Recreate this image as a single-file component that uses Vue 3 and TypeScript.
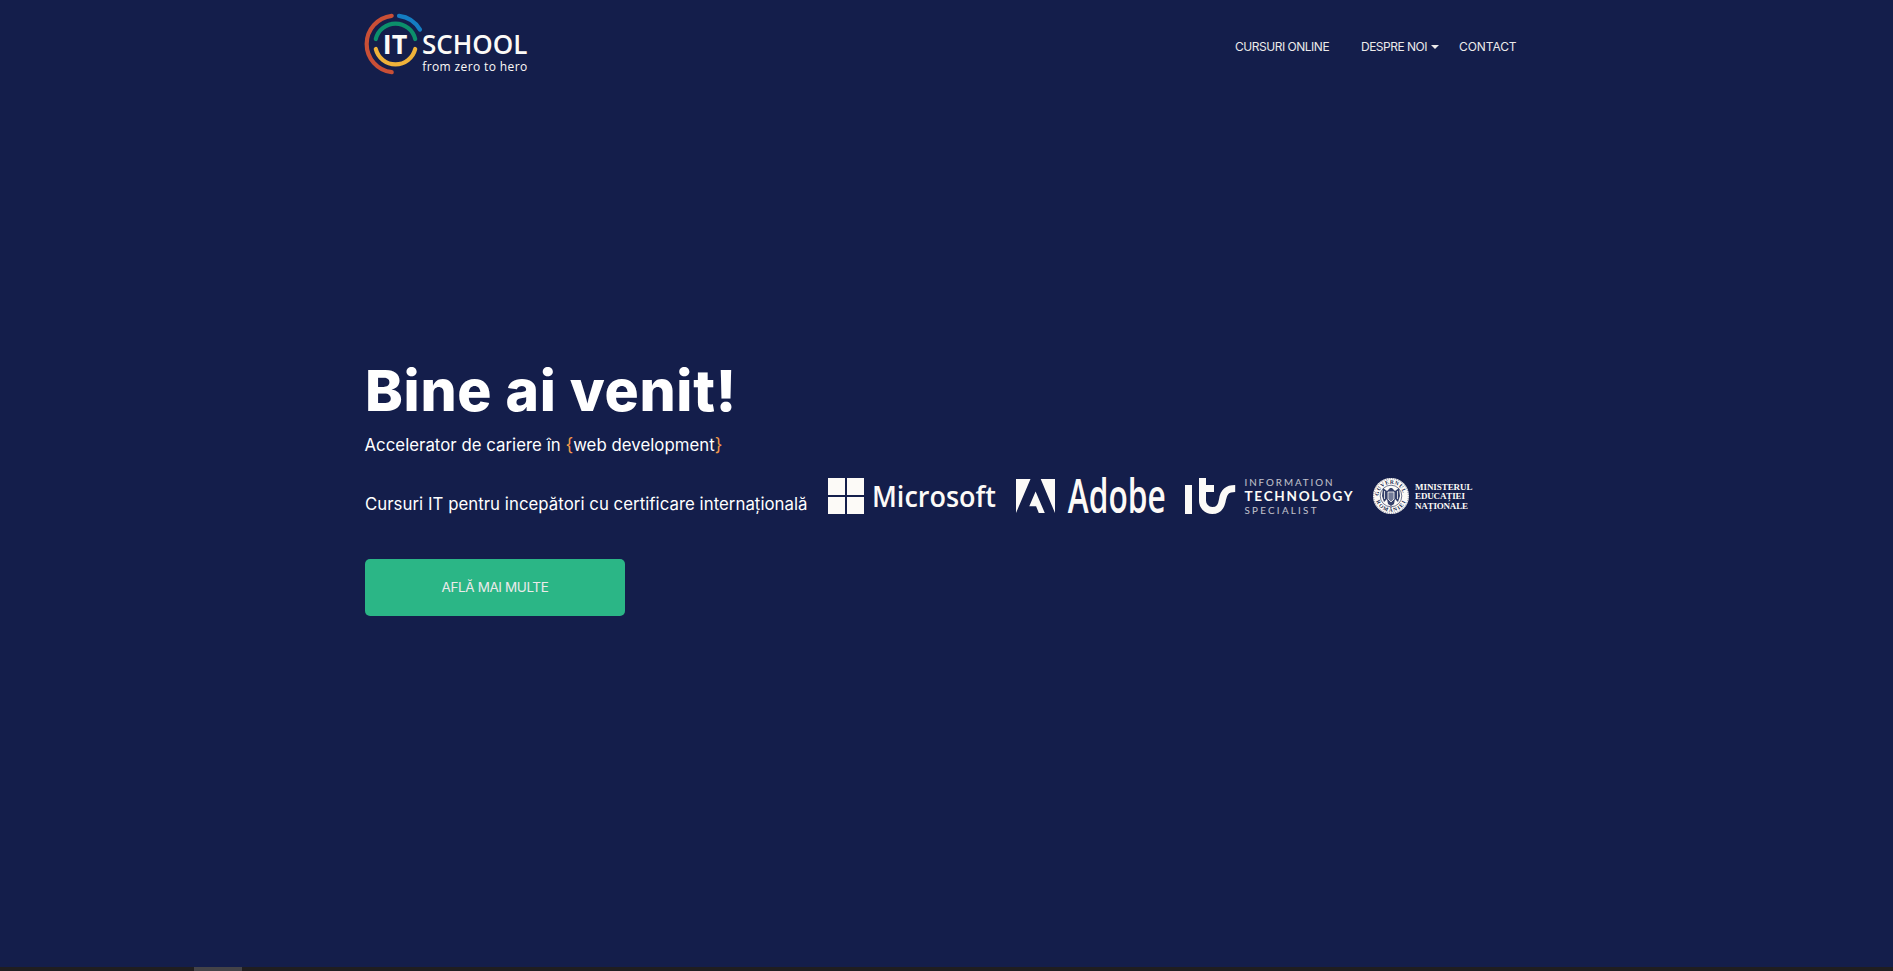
<script setup lang="ts">
interface NavItem {
  label: string
  key: string
  dropdown?: boolean
}

const navItems: NavItem[] = [
  { label: 'CURSURI ONLINE', key: 'courses' },
  { label: 'DESPRE NOI', key: 'about', dropdown: true },
  { label: 'CONTACT', key: 'contact' },
]
</script>

<template>
  <div class="page">
    <header class="container header">
      <a class="brand" aria-label="IT School">
        <svg width="164" height="64" viewBox="364 12 164 64">
          <g fill="none" stroke-width="4.2" stroke-linecap="round">
            <path d="M391.7 15.8A28.4 28.4 0 0 0 391.7 72.2" stroke="#c94f36" />
            <path d="M399 15.8A28.4 28.4 0 0 1 420 29.6" stroke="#147dc2" />
            <path d="M375.8 39A20.3 20.3 0 0 1 415.2 39" stroke="#0c8f6b" />
            <path d="M375.8 49A20.3 20.3 0 0 0 415.2 49" stroke="#efb23a" />
          </g>
          <g fill="#fcfaf7" class="brand-text">
            <text x="382.8" y="54" font-size="27.5" font-weight="700" textLength="24.5" lengthAdjust="spacingAndGlyphs">IT</text>
            <text x="421.9" y="54" font-size="27.5" font-weight="650" textLength="105.5" lengthAdjust="spacingAndGlyphs">SCHOOL</text>
            <text x="422.2" y="71" font-size="12" textLength="105" lengthAdjust="spacing">from zero to hero</text>
          </g>
        </svg>
      </a>
      <nav class="nav">
        <a v-for="item in navItems" :key="item.key" :class="['nav-link', item.key]">
          {{ item.label }}<span v-if="item.dropdown" class="caret"></span>
        </a>
      </nav>
    </header>

    <main class="container hero">
      <h1>Bine ai venit!</h1>
      <p class="lead">Accelerator de cariere în <span class="brace">{</span>web development<span class="brace">}</span></p>
      <div class="partners">
        <p class="courses-text">Cursuri IT pentru incepători cu certificare internațională</p>
        <svg class="logo" width="168" height="40" viewBox="828 477 168 40" fill="#fcfaf7">
          <path d="M828 479h17v17h-17zM847 479h17v17h-17zM828 498h17v17h-17zM847 498h17v17h-17z" />
          <text class="sans" x="872" y="507.5" font-size="29.5" font-weight="600" textLength="124" lengthAdjust="spacingAndGlyphs">Microsoft</text>
        </svg>
        <svg class="logo" width="150" height="40" viewBox="1016 477 150 40" fill="#fcfaf7">
          <path d="M1016 480h14.5l-14.5 34zM1040.7 480h14.3v34zM1035.6 492.5l9.2 21.5h-6l-2.7-6.8h-6.8z" />
          <text class="sans" x="1067.8" y="514.3" font-size="46.5" font-weight="650" textLength="98" lengthAdjust="spacingAndGlyphs">Adobe</text>
        </svg>
        <svg class="logo its" width="168" height="40" viewBox="1185 477 168 40" fill="#fcfaf7">
          <path d="M1185 486h7v29h-7z" />
          <path d="M1202.5 479v22.5a9.7 9.7 0 0 0 9.7 10c7.2 0 9.3-4.8 10.3-11 1-7 4-11 12.7-11" fill="none" stroke="#fcfaf7" stroke-width="7" />
          <path d="M1205 486h9v7h-9z" />
          <g class="geo">
            <text x="1244.5" y="487" font-size="9.8" font-weight="400" opacity=".75" textLength="88" lengthAdjust="spacing">INFORMATION</text>
            <text x="1244.5" y="502" font-size="13.6" font-weight="700" textLength="108" lengthAdjust="spacing">TECHNOLOGY</text>
            <text x="1244.5" y="514.5" font-size="9.8" font-weight="400" opacity=".75" textLength="72" lengthAdjust="spacing">SPECIALIST</text>
          </g>
        </svg>
        <svg class="logo seal" width="102" height="40" viewBox="1372 477 102 40" fill="#fcfaf7">
          <defs>
            <path id="seal-top" d="M1378.8 497a12.2 12.2 0 0 1 24.4 0" />
            <path id="seal-bottom" d="M1375.3 497a15.7 15.7 0 0 0 31.4 0" />
          </defs>
          <circle cx="1391" cy="497" r="18" />
          <circle cx="1391" cy="497" r="17.3" fill="none" stroke="#141e4b" stroke-width=".5" stroke-dasharray="1 1" />
          <g class="seal-text" fill="#141e4b">
            <text font-size="5.5"><textPath href="#seal-top" textLength="35">GUVERNUL</textPath></text>
            <text font-size="5.5"><textPath href="#seal-bottom" startOffset="5" textLength="38">ROMÂNIEI</textPath></text>
          </g>
          <circle cx="1391" cy="497" r="10.8" fill="none" stroke="#141e4b" stroke-width=".6" />
          <path d="M1383 489l4 3 3-3 2 0 3 3 4-3 1 8-2 6-3-3-1 5-3 2-3-2-1-5-3 3-2-6z" fill="#35406a" />
          <path d="M1388 493h6v7l-3 3-3-3zM1384.5 492v8M1397.5 492v8" fill="#737b98" stroke="#fcfaf7" stroke-width=".8" />
          <g class="serif" font-size="9" font-weight="700">
            <text x="1415" y="490.5" textLength="57.5" lengthAdjust="spacing">MINISTERUL</text>
            <text x="1415" y="500" textLength="50" lengthAdjust="spacing">EDUCAȚIEI</text>
            <text x="1415" y="510" textLength="53" lengthAdjust="spacing">NAȚIONALE</text>
          </g>
        </svg>
      </div>
      <button class="cta" type="button">AFLĂ MAI MULTE</button>
    </main>

    <div class="scroll-track"><div class="scroll-thumb"></div></div>
  </div>
</template>

<style>
body {
  margin: 0;
  background: #141e4b;
}
</style>

<style scoped>
.page {
  height: 971px;
  display: flex;
  flex-direction: column;
  overflow: hidden;
  background: #141e4b;
  color: #fff;
  font-family: Inter, "Open Sans", sans-serif;
}
.container {
  width: 1163px;
  margin: 0 auto;
}
.header {
  display: flex;
  justify-content: space-between;
  align-items: flex-start;
  height: 350px;
  padding-top: 12px;
  box-sizing: border-box;
}
.brand {
  margin-left: -1px;
}
.brand svg,
.logo {
  display: block;
  flex: none;
  overflow: visible;
}
.brand-text,
.sans {
  font-family: "Open Sans", sans-serif;
}
.geo {
  font-family: Lato, sans-serif;
}
.serif,
.seal-text {
  font-family: "Liberation Serif", serif;
  font-weight: 700;
}
.nav {
  display: flex;
  margin-top: 25px;
  padding-right: 11px;
}
.nav-link {
  display: flex;
  align-items: center;
  font-size: 12px;
  line-height: 20px;
  white-space: nowrap;
  color: #eceaea;
}
.courses {
  width: 126px;
  letter-spacing: -0.48px;
}
.about {
  width: 98px;
  letter-spacing: -0.5px;
}
.contact {
  width: 58px;
  letter-spacing: -0.08px;
}
.caret {
  margin-left: 4px;
  border: 4px solid transparent;
  border-top-color: #eceaea;
  border-bottom: 0;
}
.hero {
  flex: 1;
}
h1 {
  margin: 0;
  font-size: 57px;
  line-height: 82px;
  font-weight: 800;
  letter-spacing: 0.7px;
  white-space: nowrap;
}
p {
  margin: 0;
  white-space: nowrap;
}
.lead {
  margin-top: 1px;
  margin-left: -0.5px;
  font-size: 16.8px;
  line-height: 24px;
  letter-spacing: 0.03px;
}
.brace {
  color: #f2994a;
  font-size: 18px;
  line-height: 1;
}
.partners {
  display: flex;
  gap: 20px;
  margin-top: 19px;
  height: 40px;
}
.its,
.seal {
  margin-left: -1px;
}
.courses-text {
  width: 443px;
  padding-top: 16px;
  font-size: 16.8px;
  line-height: 24px;
  letter-spacing: 0.04px;
}
.cta {
  display: block;
  width: 260px;
  height: 57px;
  margin-top: 43px;
  padding: 0 0 2px;
  border: 0;
  border-radius: 5px;
  background: #2bb686;
  color: #eceaea;
  font: 400 13.5px Inter, sans-serif;
  letter-spacing: -0.4px;
}
.scroll-track {
  height: 4px;
  background: #201e20;
}
.scroll-thumb {
  width: 48px;
  height: 4px;
  margin-left: 194px;
  background: #444348;
}
</style>
